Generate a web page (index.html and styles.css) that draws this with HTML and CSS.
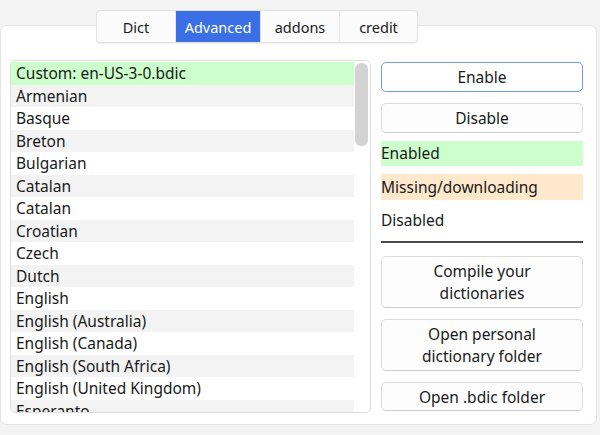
FILE: index.html
```html
<!DOCTYPE html>
<html>
<head>
<meta charset="utf-8">
<link rel="stylesheet" href="styles.css">
</head>
<body>
<div class="app">
  <div class="tabs">
    <div class="tab">Dict</div>
    <div class="tab active">Advanced</div>
    <div class="tab">addons</div>
    <div class="tab">credit</div>
  </div>
  <div class="panel">
    <div class="list">
      <div class="rows">
        <div class="row custom">Custom: en-US-3-0.bdic</div>
        <div class="row alt">Armenian</div>
        <div class="row">Basque</div>
        <div class="row alt">Breton</div>
        <div class="row">Bulgarian</div>
        <div class="row alt">Catalan</div>
        <div class="row">Catalan</div>
        <div class="row alt">Croatian</div>
        <div class="row">Czech</div>
        <div class="row alt">Dutch</div>
        <div class="row">English</div>
        <div class="row alt">English (Australia)</div>
        <div class="row">English (Canada)</div>
        <div class="row alt">English (South Africa)</div>
        <div class="row">English (United Kingdom)</div>
        <div class="row alt">Esperanto</div>
      </div>
      <div class="scrollbar"><div class="thumb"></div></div>
    </div>
    <div class="side">
      <div class="btn primary">Enable</div>
      <div class="btn disable">Disable</div>
      <div class="legend enabled">Enabled</div>
      <div class="legend missing">Missing/downloading</div>
      <div class="legend plain">Disabled</div>
      <div class="sep"></div>
      <div class="btn tall">Compile your<br>dictionaries</div>
      <div class="btn tall">Open personal<br>dictionary folder</div>
      <div class="btn last">Open .bdic folder</div>
    </div>
  </div>
</div>
</body>
</html>
```

FILE: styles.css
```css
* { box-sizing: border-box; }
html, body {
  margin: 0;
  padding: 0;
  background: #f3f3f3;
  width: 600px;
  height: 435px;
  overflow: hidden;
  font-family: "Noto Sans", "Open Sans", sans-serif;
  font-size: 15.5px;
  color: #1a1a1a;
}
.app {
  padding-top: 10px;
}
.tabs {
  position: relative;
  z-index: 1;
  display: flex;
  margin-left: 96px;
  width: 322px;
  height: 33px;
  margin-bottom: -18px;
  background: #fbfbfb;
  border: 1px solid #e2e2e2;
  border-radius: 4px;
  box-shadow: 0 1px 1px rgba(0,0,0,0.06);
  font-size: 14.5px;
}
.tab {
  display: flex;
  align-items: center;
  justify-content: center;
  width: 79px;
  height: 100%;
  border-right: 1px solid #e6e6e6;
  color: #1a1a1a;
}
.tab.active {
  width: 85px;
  background: #3a6fe5;
  color: #ffffff;
  border-right: 1px solid #dcdcdc;
}
.tab:last-child { border-right: none; flex: 1; }
.panel {
  width: 597px;
  height: 400px;
  background: #ffffff;
  border: 1px solid #e4e4e4;
  border-radius: 7px;
  padding: 34px 0 0 9px;
  display: flex;
  gap: 10px;
}
.list {
  width: 361px;
  height: 353px;
  border: 1px solid #dedede;
  border-radius: 5px;
  display: flex;
  overflow: hidden;
  padding-top: 1px;
}
.rows {
  width: 343px;
  overflow: hidden;
}
.row {
  height: 22.5px;
  line-height: 22.5px;
  padding-left: 5px;
  white-space: nowrap;
}
.row.alt { background: #f3f3f3; }
.row.custom { background: #ccffcc; }
.scrollbar {
  flex: 1;
  padding: 1px 2px 0 1px;
}
.thumb {
  height: 83px;
  border-radius: 6px;
  background: #d3d3d3;
}
.side {
  width: 202px;
  display: flex;
  flex-direction: column;
  padding-top: 2px;
}
.btn {
  display: flex;
  align-items: center;
  justify-content: center;
  text-align: center;
  background: #fdfdfd;
  border: 1px solid #dcdcdc;
  border-bottom-color: #cdcdcd;
  border-radius: 5px;
  height: 30px;
  line-height: 22px;
}
.btn.primary {
  border: 1.5px solid #6e9aec;
  background: #ffffff;
}
.btn.disable { margin-top: 11px; }
.legend {
  height: 25px;
  line-height: 25px;
  white-space: nowrap;
}
.legend.enabled { margin-top: 8px; background: #ccffcc; }
.legend.missing { margin-top: 8px; height: 26px; line-height: 26px; background: #ffe8cc; }
.legend.plain { margin-top: 8px; }
.sep {
  margin-top: 8px;
  height: 2px;
  background: #4a4a4a;
}
.btn.tall {
  height: 52px;
  margin-top: 13px;
}
.btn.tall + .btn.tall { margin-top: 11px; }
.btn.last {
  margin-top: 11px;
  height: 29px;
}
```
